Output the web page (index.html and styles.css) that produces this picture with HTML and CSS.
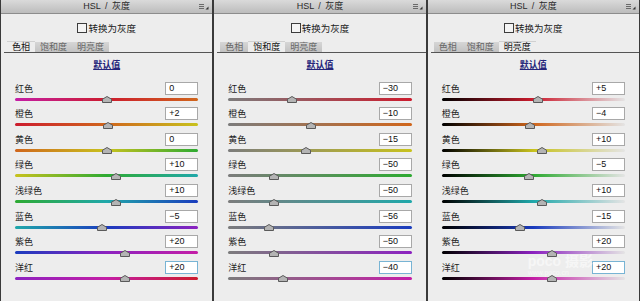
FILE: index.html
```html
<!DOCTYPE html>
<html>
<head>
    <meta charset="UTF-8">
    <meta name="viewport" content="width=device-width, initial-scale=1.0">
    <title>HSL / 灰度</title>
    <link rel="stylesheet" href="styles.css">
</head>
<body>
    <div class="panels">
        <div class="panel" data-mode="hue">
            <div class="title">HSL / 灰度
                <svg class="menu" width="10" height="6" viewBox="0 0 10 6"><path d="M0 0.5h5M0 2.5h5M0 4.5h5" stroke="#6a6a6a" stroke-width="1"/><path d="M6.5 5.5L9.5 5.5L9.5 2.5Z" fill="#333"/></svg>
            </div>
            <div class="convert"><span class="box"></span>转换为灰度</div>
            <div class="tabs">
                <span class="tab active">色相</span>
                <span class="tab">饱和度</span>
                <span class="tab">明亮度</span>
            </div>
            <div class="reset"><a href="#">默认值</a></div>
            <div class="rows"></div>
        </div>
        <div class="panel" data-mode="sat">
            <div class="title">HSL / 灰度
                <svg class="menu" width="10" height="6" viewBox="0 0 10 6"><path d="M0 0.5h5M0 2.5h5M0 4.5h5" stroke="#6a6a6a" stroke-width="1"/><path d="M6.5 5.5L9.5 5.5L9.5 2.5Z" fill="#333"/></svg>
            </div>
            <div class="convert"><span class="box"></span>转换为灰度</div>
            <div class="tabs">
                <span class="tab">色相</span>
                <span class="tab active">饱和度</span>
                <span class="tab">明亮度</span>
            </div>
            <div class="reset"><a href="#">默认值</a></div>
            <div class="rows"></div>
        </div>
        <div class="panel" data-mode="light">
            <div class="title">HSL / 灰度
                <svg class="menu" width="10" height="6" viewBox="0 0 10 6"><path d="M0 0.5h5M0 2.5h5M0 4.5h5" stroke="#6a6a6a" stroke-width="1"/><path d="M6.5 5.5L9.5 5.5L9.5 2.5Z" fill="#333"/></svg>
            </div>
            <div class="convert"><span class="box"></span>转换为灰度</div>
            <div class="tabs">
                <span class="tab">色相</span>
                <span class="tab">饱和度</span>
                <span class="tab active">明亮度</span>
            </div>
            <div class="reset"><a href="#">默认值</a></div>
            <div class="rows"></div>
            <div class="watermark">poco 摄影<small>www.poco.cn</small></div>
        </div>
    </div>

    <script>
        const names = ['红色', '橙色', '黄色', '绿色', '浅绿色', '蓝色', '紫色', '洋红'];
        const colors = ['#cc1c2e', '#d0661c', '#c8c21e', '#2eaa32', '#20a8aa', '#1a3cbe', '#8c22c0', '#c41ea6'];
        const values = {
            hue: [0, 2, 0, 10, 10, -5, 20, 20],
            sat: [-30, -10, -15, -50, -50, -56, -50, -40],
            light: [5, -4, 10, -5, 10, -15, 20, 20]
        };

        // 滑块颜色
        function trackColor(mode, i) {
            const c = colors[i];
            if (mode === 'hue') {
                const prev = colors[(i + 7) % 8];
                const next = colors[(i + 1) % 8];
                return 'linear-gradient(to right, ' + prev + ', ' + c + ' 50%, ' + next + ')';
            }
            if (mode === 'sat') {
                return 'linear-gradient(to right, #7c7c7c, ' + c + ')';
            }
            return 'linear-gradient(to right, #000, ' + c + ' 50%, #e4e4e4)';
        }

        function formatValue(v) {
            if (v > 0) return '+' + v;
            if (v < 0) return '\u2212' + Math.abs(v);
            return '0';
        }

        document.querySelectorAll('.panel').forEach(panel => {
            const mode = panel.dataset.mode;
            const rows = panel.querySelector('.rows');
            names.forEach((name, i) => {
                const v = values[mode][i];
                const row = document.createElement('div');
                row.className = 'row';
                row.innerHTML =
                    '<div class="line"><span class="name">' + name + '</span>' +
                    '<span class="value' + (i === 7 ? ' focus' : '') + '">' + formatValue(v) + '</span></div>' +
                    '<div class="track" style="background: ' + trackColor(mode, i) + '">' +
                    '<svg class="thumb" style="left: ' + (50 + v / 2) + '%" width="10" height="7" viewBox="0 0 10 7">' +
                    '<path d="M0.5 3.2L5 0.5L9.5 3.2V6.5H0.5Z" fill="#b4b4b4" stroke="#5a5a5a" stroke-width="1"/></svg></div>';
                rows.appendChild(row);
            });
        });
    </script>
</body>
</html>
```

FILE: styles.css
```css
* {
    margin: 0;
    padding: 0;
    box-sizing: border-box;
}

body {
    background: #ededed;
    font-family: "Liberation Sans", "Noto Sans CJK SC", sans-serif;
    font-size: 9px;
    color: #1c1c1c;
    overflow: hidden;
}

.panels {
    display: flex;
    height: 301px;
}

.panel {
    flex: 1;
    position: relative;
    background: #ededed;
    border-left: 1px solid #3a3a3a;
    border-right: 1px solid #3a3a3a;
}

.title {
    position: relative;
    height: 14px;
    line-height: 13px;
    text-align: center;
    font-size: 9px;
    color: #2a2a2a;
    background: linear-gradient(#dadada, #bcbcbc);
    border-bottom: 1px solid #8c8c8c;
    word-spacing: 2px;
}

.menu {
    position: absolute;
    right: 3px;
    top: 4px;
}

.convert {
    display: flex;
    align-items: center;
    justify-content: center;
    height: 12px;
    margin-top: 8px;
    font-size: 9.5px;
    color: #1a1a1a;
}

.box {
    width: 10px;
    height: 10px;
    border: 1px solid #3c3c3c;
    background: #f4f4f4;
    margin-right: 1px;
}

.tabs {
    display: flex;
    height: 11px;
    margin: 8px 0 0 3px;
    padding-left: 3px;
    border-bottom: 1px solid #555;
}

.tab {
    height: 10px;
    line-height: 10px;
    padding: 0 5px;
    color: #666;
    background: linear-gradient(#d6d6d6, #c2c2c2);
}

.tab.active {
    color: #111;
    background: #ededed;
    height: 11px;
    border-top: 1px solid #d0d0d0;
    margin-top: -1px;
}

.reset {
    height: 10px;
    line-height: 10px;
    margin-top: 7px;
    text-align: center;
}

.reset a {
    color: #25257a;
    font-weight: bold;
    text-decoration: underline;
}

.rows {
    margin-top: 11.5px;
    padding: 0 14px;
}

.row {
    height: 25.63px;
}

.line {
    display: flex;
    align-items: center;
    justify-content: space-between;
    height: 13px;
}

.name {
    color: #1c1c1c;
}

.value {
    width: 33px;
    height: 13px;
    line-height: 11px;
    padding-left: 3px;
    background: #fff;
    border: 1px solid #a8a8a8;
    color: #111;
}

.value.focus {
    border-color: #78b4d4;
}

.track {
    position: relative;
    height: 3px;
    margin-top: 3px;
    border-radius: 1.5px;
}

.thumb {
    position: absolute;
    top: -1.5px;
    transform: translateX(-50%);
}

.watermark {
    position: absolute;
    left: 100px;
    top: 254px;
    font-size: 14px;
    font-weight: bold;
    color: rgba(255, 255, 255, 0.55);
    line-height: 14px;
    pointer-events: none;
}

.watermark small {
    display: block;
    font-size: 7px;
    font-weight: normal;
    line-height: 9px;
}
```
